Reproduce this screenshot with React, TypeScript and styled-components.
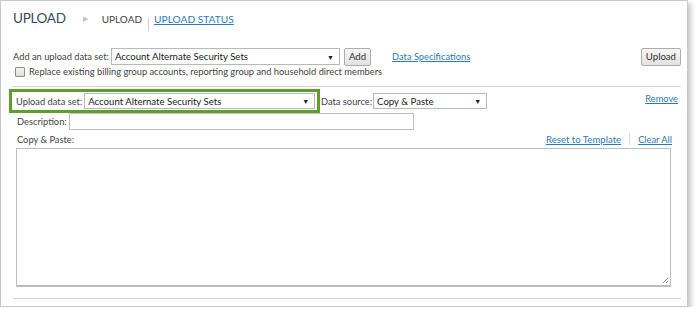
import { createGlobalStyle, styled } from "styled-components";

const GlobalStyle = createGlobalStyle`
  body {
    margin: 0;
    background: #ffffff;
    font-family: Lato, "Open Sans", sans-serif;
    color: #333333;
  }
`;

const Frame = styled.div`
  box-sizing: border-box;
  width: 688px;
  height: 307px;
  border: 1px solid #c8c8c8;
  box-shadow: 3px 3px 5px rgba(0, 0, 0, 0.22);
  padding: 0 4px 0 11px;
  background: #fff;
`;

const Header = styled.div`
  display: flex;
  align-items: baseline;
  height: 34px;
  padding-top: 9px;
  box-sizing: border-box;
`;

const Title = styled.h1`
  margin: 0 0 0 1px;
  font-size: 13.5px;
  font-weight: 400;
  letter-spacing: -0.3px;
  color: #3b4a5a;
`;

const Arrow = styled.span`
  margin: 0 14px 0 17px;
  font-size: 7px;
  color: #c4c4c4;
  position: relative;
  top: -2px;
`;

const Crumb = styled.span`
  font-size: 10px;
  color: #444;
`;

const Sep = styled.span`
  display: inline-block;
  width: 1px;
  height: 13px;
  background: #d0d0d0;
  margin: 0 5px 0 6px;
  align-self: center;
  position: relative;
  top: 2px;
`;

const LinkText = styled.a<{ $size?: number }>`
  font-size: ${(p) => p.$size ?? 9.3}px;
  color: #2b7bb9;
  text-decoration: underline;
  cursor: pointer;
  white-space: nowrap;
`;

const Row = styled.div<{ $height: number }>`
  box-sizing: border-box;
  display: flex;
  align-items: center;
  height: ${(p) => p.$height}px;
  font-size: 9.3px;
  white-space: nowrap;
`;

const Label = styled.span`
  font-size: 9.3px;
  color: #444;
  margin-right: 2px;
`;

const Select = styled.div<{ $width: number }>`
  box-sizing: border-box;
  flex-shrink: 0;
  width: ${(p) => p.$width}px;
  height: 16px;
  border: 1px solid #b9b9b9;
  display: flex;
  align-items: center;
  justify-content: space-between;
  padding: 0 5px 0 3px;
  font-size: 9.6px;
  color: #222;
  background: #fff;
  &::after {
    content: "▼";
    font-size: 7px;
    color: #222;
  }
`;

const Button = styled.button`
  box-sizing: border-box;
  height: 18px;
  padding: 0 4px;
  border: 1px solid #adadad;
  border-radius: 2px;
  background: linear-gradient(#f6f6f6, #e2e2e2);
  font-family: inherit;
  font-size: 9.6px;
  color: #333;
  line-height: 14px;
`;

const Spacer = styled.div`
  flex: 1;
`;

const CheckRow = styled.label`
  display: flex;
  align-items: center;
  gap: 4px;
  height: 11px;
  padding-left: 3px;
  font-size: 9.3px;
  color: #444;
  white-space: nowrap;
`;

const Box = styled.span`
  box-sizing: border-box;
  width: 10px;
  height: 10px;
  border: 1px solid #8f8f8f;
  border-radius: 1px;
  background: linear-gradient(#f4f4f4, #dcdcdc);
`;

const Rule = styled.hr`
  border: 0;
  border-top: 1px solid #d6d6d6;
  margin: 0;
`;

const Highlight = styled.div`
  box-sizing: border-box;
  display: flex;
  align-items: center;
  width: 311px;
  height: 24px;
  border: 3px solid #5e9f2c;
  padding-left: 4px;
  margin-left: -3px;
  margin-right: 1px;
`;

const Input = styled.div<{ $width: number }>`
  box-sizing: border-box;
  width: ${(p) => p.$width}px;
  height: 17px;
  border: 1px solid #c2c2c2;
`;

const Divider = styled.span`
  width: 1px;
  height: 12px;
  background: #d8d8d8;
  margin: 0 8px;
`;

const TextArea = styled.div`
  position: relative;
  box-sizing: border-box;
  width: 655px;
  height: 139px;
  margin-left: 4px;
  border: 1px solid #bdbdbd;
  border-bottom-width: 2px;
`;

const Grip = styled.svg`
  position: absolute;
  right: 1px;
  bottom: 1px;
`;

const Body = styled.div`
  padding-right: 2px;
`;

export default function App() {
  return (
    <>
      <GlobalStyle />
      <Frame>
        <Header>
          <Title>UPLOAD</Title>
          <Arrow>▶</Arrow>
          <Crumb>UPLOAD</Crumb>
          <Sep />
          <LinkText $size={10.2}>UPLOAD STATUS</LinkText>
        </Header>
        <Body>
          <Row $height={31} style={{ paddingTop: 13, paddingBottom: 1, paddingLeft: 1 }}>
            <Label>Add an upload data set:</Label>
            <Select $width={229} style={{ height: 17 }}>Account Alternate Security Sets</Select>
            <Button style={{ marginLeft: 4 }}>Add</Button>
            <LinkText style={{ marginLeft: 21 }}>Data Specifications</LinkText>
            <Spacer />
            <Button>Upload</Button>
          </Row>
          <CheckRow>
            <Box />
            Replace existing billing group accounts, reporting group and household direct members
          </CheckRow>
          <Rule style={{ marginTop: 9 }} />
          <Row $height={24} style={{ marginTop: 2 }}>
            <Highlight>
              <Label>Upload data set:</Label>
              <Select $width={231}>Account Alternate Security Sets</Select>
            </Highlight>
            <Label style={{ marginRight: 1 }}>Data source:</Label>
            <Select $width={114}>Copy &amp; Paste</Select>
            <Spacer />
            <LinkText style={{ marginRight: 3, position: "relative", top: -3 }}>Remove</LinkText>
          </Row>
          <Row $height={17} style={{ paddingLeft: 5 }}>
            <Label style={{ marginRight: 2 }}>Description:</Label>
            <Input $width={345} />
          </Row>
          <Row $height={18} style={{ paddingLeft: 5 }}>
            <Label>Copy &amp; Paste:</Label>
            <Spacer />
            <LinkText $size={9.6}>Reset to Template</LinkText>
            <Divider />
            <LinkText style={{ marginRight: 9 }}>Clear All</LinkText>
          </Row>
          <TextArea>
            <Grip width="7" height="7" viewBox="0 0 7 7">
              <path d="M6 1 L1 6 M6 4 L4 6" stroke="#9a9a9a" strokeWidth="1" />
            </Grip>
          </TextArea>
        </Body>
        <Rule style={{ marginTop: 11, marginLeft: 1, marginRight: 2 }} />
      </Frame>
    </>
  );
}
